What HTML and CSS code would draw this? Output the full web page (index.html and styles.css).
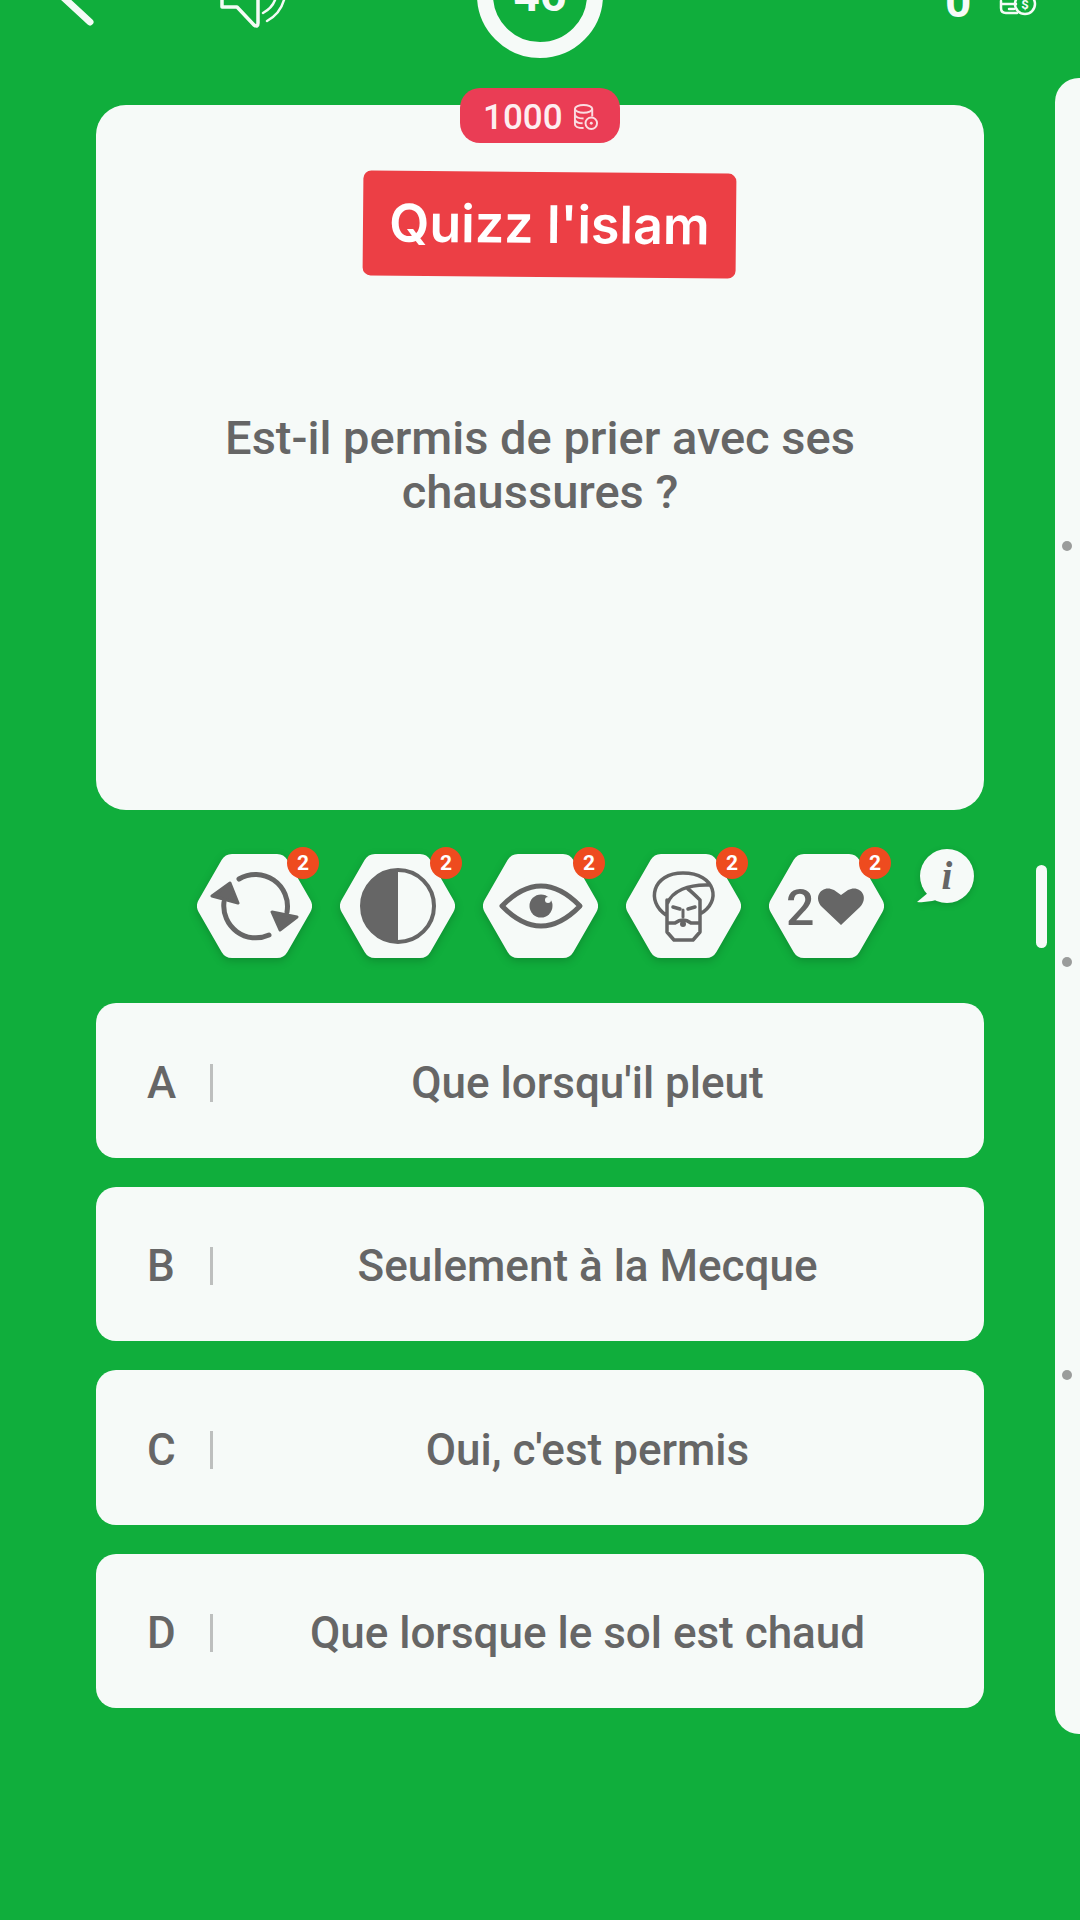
FILE: index.html
```html
<!DOCTYPE html>
<html lang="fr">
<head>
<meta charset="utf-8">
<title>Quizz l'islam</title>
<link rel="stylesheet" href="styles.css">
</head>
<body>
<div class="screen">
  <header class="topbar">
    <svg class="back" viewBox="50 0 45 30"><path d="M64 -2L90 22"/></svg>
    <svg class="sound" viewBox="218 0 70 30"><path d="M222 0V7H237L254 25Q258 28 258 23V0"/><path class="thin" d="M263 13Q272 8 275 0M267 21Q280 14 284 0"/></svg>
    <div class="ring">46</div>
    <div class="score">0</div>
    <svg class="coins" viewBox="998 0 38 16"><path d="M1000 1V8Q1000 13 1005 13H1016M1000 4H1015M1008 9H1013"/><circle cx="1024" cy="4" r="10"/><text class="coins-s" x="1024" y="9">$</text></svg>
  </header>

  <main class="carousel">
    <section class="slide">
      <div class="card">
        <div class="pill">
          <span>1000</span>
          <svg class="pill-icon" viewBox="0 0 26 28"><ellipse cx="11" cy="5" rx="9" ry="4"/><path d="M2 5V21Q2 25 11 25M20 5V13M2 11Q3 15 11 15M2 16Q3 20 10 20"/><circle cx="19" cy="20" r="6"/><circle class="dot-fill" cx="19" cy="20" r="1.5"/></svg>
        </div>
        <h1 class="title">Quizz l'islam</h1>
        <p class="question">Est-il permis de prier avec ses<br>chaussures ?</p>
      </div>

      <div class="jokers">
        <div class="joker">
          <svg viewBox="0 0 115 104"><polygon class="hex" points="35,12 80,12 103,52 80,92 35,92 12,52"/><path class="line l5" d="M42 25A32 32 0 0 1 90 58M27 48A32 32 0 0 0 72 81"/><path class="solid arrow" d="M15 42L33 29L41 49ZM100 63L83 76L75 58Z"/></svg>
          <span class="badge">2</span>
        </div>
        <div class="joker">
          <svg viewBox="0 0 115 104"><polygon class="hex" points="35,12 80,12 103,52 80,92 35,92 12,52"/><circle class="line l4" cx="58" cy="52" r="36"/><path class="solid" d="M58 16A36 36 0 0 0 58 88Z"/></svg>
          <span class="badge">2</span>
        </div>
        <div class="joker">
          <svg viewBox="0 0 115 104"><polygon class="hex" points="35,12 80,12 103,52 80,92 35,92 12,52"/><path class="line l5" d="M19 52Q58 12 97 52Q58 92 19 52Z"/><circle class="solid" cx="58" cy="52" r="11.5"/><circle class="hex-fill" cx="65" cy="46" r="3"/></svg>
          <span class="badge">2</span>
        </div>
        <div class="joker">
          <svg viewBox="0 0 115 104"><polygon class="hex" points="35,12 80,12 103,52 80,92 35,92 12,52"/><path class="line l35" d="M40 61C20 48 26 19 57 19C90 19 96 48 74 60M41 50C46 37 62 30 84 31M41 46V78L48 86H67L74 78V46C70 42 66 38 62 35M41 69H49Q57 63 65 69H74M47 53L54 55M62 55L69 53"/><path class="line l3" d="M57 56V63"/><circle class="solid" cx="57" cy="70" r="3"/></svg>
          <span class="badge">2</span>
        </div>
        <div class="joker">
          <svg viewBox="0 0 115 104"><polygon class="hex" points="35,12 80,12 103,52 80,92 35,92 12,52"/><text class="two" x="17" y="71">2</text><path class="solid" d="M72 71L53 53C43 42 54 30 65 36L72 41L79 36C90 30 101 42 91 53Z"/></svg>
          <span class="badge">2</span>
        </div>
        <div class="info">
          <svg viewBox="0 0 62 62"><circle cx="33" cy="28" r="27"/><path d="M15 44L3 54Q14 55 26 51Z"/></svg>
          <span class="info-i">i</span>
        </div>
      </div>

      <ul class="answers">
        <li class="answer"><span class="letter">A</span><span class="sep"></span><span class="text">Que lorsqu'il pleut</span></li>
        <li class="answer"><span class="letter">B</span><span class="sep"></span><span class="text">Seulement à la Mecque</span></li>
        <li class="answer"><span class="letter">C</span><span class="sep"></span><span class="text">Oui, c'est permis</span></li>
        <li class="answer"><span class="letter">D</span><span class="sep"></span><span class="text">Que lorsque le sol est chaud</span></li>
      </ul>
    </section>

    <aside class="peek">
      <span class="dot dot-a"></span>
      <span class="dot dot-b"></span>
      <span class="dot dot-c"></span>
    </aside>
  </main>
  <div class="scrollbar"></div>
</div>
</body>
</html>
```

FILE: styles.css
```css
* { box-sizing: border-box; }
html, body { margin: 0; padding: 0; }
body { width: 1080px; height: 1920px; overflow: hidden; background: #10ae3c; font-family: Roboto, "Liberation Sans", sans-serif; }
.screen { position: relative; width: 1080px; height: 1920px; overflow: hidden; }

/* top bar, cropped by the top edge of the window */
.topbar { display: flex; align-items: flex-end; height: 58px; padding-left: 50px; color: #fff; }
.topbar svg { display: block; overflow: visible; fill: none; stroke: #f4fbf6; stroke-linecap: round; stroke-linejoin: round; }
.back { width: 45px; height: 30px; margin-bottom: 28px; stroke-width: 7; }
.sound { width: 70px; height: 30px; margin-left: 123px; margin-bottom: 28px; stroke-width: 3.5; }
.sound .thin { stroke-width: 2.5; }
.ring { display: flex; flex: none; align-items: center; justify-content: center; width: 126px; height: 126px; margin-left: 189px; border: 16px solid #f6faf8; border-radius: 50%; font-size: 46px; font-weight: 700; color: #f6faf8; }
.score { margin-left: 342px; margin-bottom: 41px; font-size: 46px; font-weight: 700; line-height: 32px; height: 32px; color: #f6faf8; }
.coins { width: 38px; height: 16px; margin-left: 28px; margin-bottom: 42px; stroke-width: 2.5; }
.coins-s { font: 700 13px Roboto, sans-serif; fill: #f4fbf6; stroke: none; text-anchor: middle; }

/* carousel */
.carousel { display: flex; align-items: flex-start; gap: 71px; padding-left: 96px; margin-top: 20px; }
.slide { flex: none; width: 888px; padding-top: 27px; }
.peek { position: relative; flex: none; width: 200px; height: 1656px; background: #f6faf8; border-radius: 24px; }
.dot { position: absolute; left: 7px; width: 10px; height: 10px; border-radius: 50%; background: #9a9c9b; }
.dot-a { top: 463px; }
.dot-b { top: 879px; }
.dot-c { top: 1292px; }

/* question card */
.card { position: relative; display: flex; flex-direction: column; align-items: center; height: 705px; padding-top: 66px; background: #f6faf8; border-radius: 30px; }
.pill { position: absolute; top: -17px; left: 364px; display: flex; align-items: center; gap: 10px; width: 160px; height: 55px; padding: 4px 0 0 23px; background: #ea3d55; border-radius: 20px; color: #fdeef0; font-size: 35px; font-weight: 500; }
.pill-icon { width: 25px; height: 27px; fill: none; stroke: #fbdde2; stroke-width: 2; }
.pill-icon .dot-fill { fill: #fbdde2; stroke: none; }
.title { display: flex; align-items: center; justify-content: center; width: 373px; height: 105px; margin: 1px 0 0 18px; background: #ec3f45; border-radius: 8px; color: #fff; font-family: Inter, Roboto, sans-serif; font-size: 52px; font-weight: 600; transform: rotate(0.5deg); }
.question { margin: 134px 0 0; color: #666; font-size: 47px; line-height: 54px; font-weight: 500; text-align: center; }

/* jokers */
.jokers { position: relative; display: flex; gap: 28px; padding-left: 101px; margin-top: 44px; height: 104px; }
.joker { position: relative; flex: none; width: 115px; height: 104px; }
.joker svg { display: block; width: 115px; height: 104px; overflow: visible; filter: drop-shadow(0 3px 4px rgba(0, 0, 0, 0.18)); }
.hex { fill: #f6faf8; stroke: #f6faf8; stroke-width: 24; stroke-linejoin: round; }
.hex-fill { fill: #f6faf8; }
.line { fill: none; stroke: #666; stroke-linecap: round; stroke-linejoin: round; }
.l3 { stroke-width: 3; }
.l35 { stroke-width: 3.5; }
.l4 { stroke-width: 4; }
.l5 { stroke-width: 5; }
.solid { fill: #666; }
.arrow { stroke: #666; stroke-width: 3; stroke-linejoin: round; }
.two { font: 500 50px Roboto, sans-serif; fill: #666; }
.badge { position: absolute; top: -7px; right: -7px; width: 32px; height: 32px; border-radius: 50%; background: #ee4b1f; color: #fff; font-size: 21px; font-weight: 700; line-height: 32px; text-align: center; }
.info { position: absolute; top: -6px; left: 818px; width: 62px; height: 62px; }
.info svg { display: block; width: 62px; height: 62px; fill: #f6faf8; filter: drop-shadow(0 2px 3px rgba(0, 0, 0, 0.15)); }
.info-i { position: absolute; top: 0; left: 3px; width: 60px; height: 56px; color: #666; font-family: "Liberation Serif", serif; font-style: italic; font-weight: 700; font-size: 39px; line-height: 56px; text-align: center; }

/* answers */
.answers { display: flex; flex-direction: column; gap: 29px; margin: 45px 0 0; padding: 0; list-style: none; }
.answer { display: flex; align-items: center; height: 154.5px; padding: 5px 22px 0 51px; background: #f6faf8; border-radius: 20px; color: #666; font-size: 44px; font-weight: 500; }
.letter { flex: none; width: 63px; }
.sep { flex: none; width: 3px; height: 38px; background: #bdbfbe; }
.text { flex: 1; text-align: center; }

.scrollbar { position: absolute; top: 865px; left: 1036px; width: 11px; height: 83px; background: #f6faf8; border-radius: 6px; }
```
